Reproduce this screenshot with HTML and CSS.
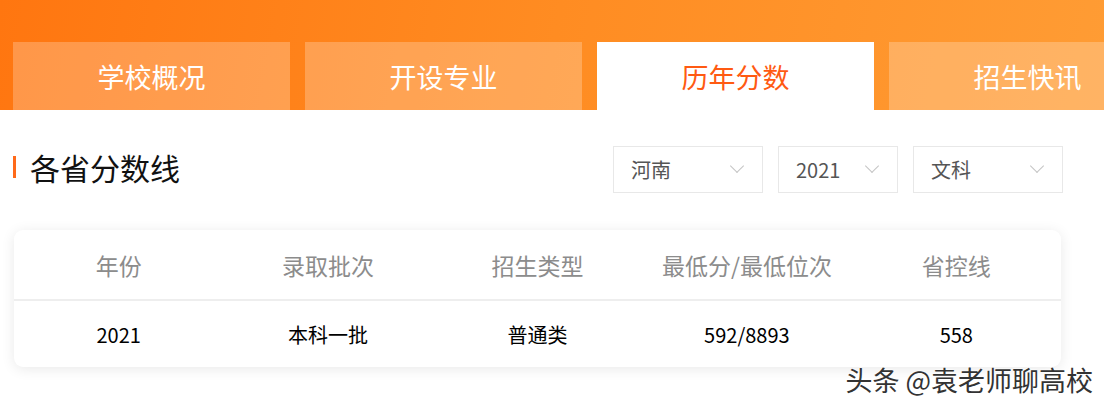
FILE: index.html
```html
<!DOCTYPE html>
<html lang="zh-CN">
<head>
	<meta charset="UTF-8">
	<title>历年分数</title>
	<link rel="stylesheet" href="styles.css">
</head>
<body>
	<div class="header">
		<div class="tabs">
			<div class="tab">学校概况</div>
			<div class="tab">开设专业</div>
			<div class="tab active">历年分数</div>
			<div class="tab">招生快讯</div>
		</div>
	</div>

	<div class="toolbar">
		<div class="title">各省分数线</div>
		<div class="filters">
			<div class="select wide"><span>河南</span><i class="chev"></i></div>
			<div class="select"><span>2021</span><i class="chev"></i></div>
			<div class="select wide"><span>文科</span><i class="chev"></i></div>
		</div>
	</div>

	<div class="card">
		<div class="row head">
			<div>年份</div>
			<div>录取批次</div>
			<div>招生类型</div>
			<div>最低分/最低位次</div>
			<div>省控线</div>
		</div>
		<div class="row">
			<div>2021</div>
			<div>本科一批</div>
			<div>普通类</div>
			<div>592/8893</div>
			<div>558</div>
		</div>
	</div>

	<div class="mark">头条 @袁老师聊高校</div>
</body>
</html>
```

FILE: styles.css
```css
body {
	margin: 0;
	width: 1104px;
	height: 406px;
	overflow: hidden;
	background: #fff;
	font-family: "Noto Sans CJK SC", "Noto Sans", sans-serif;
	position: relative;
}

.header {
	height: 110px;
	background: linear-gradient(100deg, #ff7610 0%, #ff8c22 50%, #ff9c34 100%);
	display: flex;
	align-items: flex-end;
	padding-left: 13px;
	overflow: hidden;
}

.tabs {
	display: flex;
	gap: 15px;
}

.tab {
	flex: 0 0 277px;
	height: 68px;
	display: flex;
	align-items: center;
	justify-content: center;
	font-size: 27px;
	color: #fff;
	background: rgba(255, 255, 255, 0.24);
}

.tab.active {
	background: #fff;
	color: #ff5a12;
}

.toolbar {
	display: flex;
	justify-content: space-between;
	align-items: center;
	padding: 36px 41px 0 13px;
}

.title {
	font-size: 30px;
	line-height: 40px;
	color: #111;
	border-left: 3px solid #ff6a1a;
	padding-left: 14px;
	height: 22px;
	display: flex;
	align-items: center;
	margin-top: -6px;
}

.filters {
	display: flex;
	gap: 15px;
}

.select {
	border: 1px solid #e8e8e8;
	display: flex;
	align-items: center;
	justify-content: space-between;
	padding: 0 20px 0 17px;
	box-sizing: border-box;
	width: 120px;
	height: 47px;
	font-size: 20px;
	color: #555;
}

.select.wide {
	width: 150px;
}

.chev {
	width: 9px;
	height: 9px;
	border-right: 1.5px solid #c4c4c4;
	border-bottom: 1.5px solid #c4c4c4;
	transform: rotate(45deg);
	margin-top: -8px;
}

.card {
	margin: 37px 43px 0 14px;
	background: #fff;
	border-radius: 9px;
	box-shadow: 0 2px 14px rgba(0, 0, 0, 0.09);
}

.row {
	display: grid;
	grid-template-columns: repeat(5, 1fr);
	height: 66px;
	align-items: center;
	text-align: center;
	font-size: 20px;
	color: #000;
}

.row.head {
	height: 69px;
	border-bottom: 2px solid #eee;
	font-size: 23px;
	color: #8c8c8c;
}

.mark {
	position: absolute;
	right: 11px;
	top: 360px;
	font-size: 27px;
	color: #333;
	text-shadow: 0 0 2px #fff, 0 0 2px #fff;
	letter-spacing: 0;
}
```
